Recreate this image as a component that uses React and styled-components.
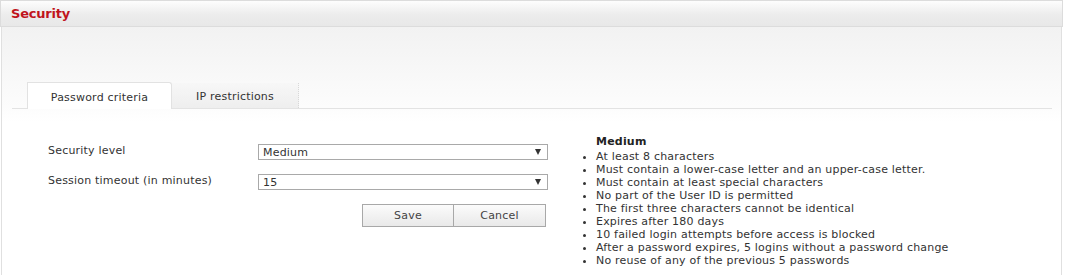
import React, { useState } from 'react';
import styled, { createGlobalStyle } from 'styled-components';

const GlobalStyle = createGlobalStyle`
  html, body {
    margin: 0;
    padding: 0;
    background: #ffffff;
  }
  body {
    font-family: "DejaVu Sans", Verdana, "Liberation Sans", sans-serif;
    font-size: 11px;
    letter-spacing: 0.2px;
    color: #333333;
  }
`;

const Page = styled.div`
  width: 1065px;
`;

const Header = styled.div`
  box-sizing: border-box;
  width: 1063px;
  height: 27px;
  border: 1px solid #dcdcdc;
  background: linear-gradient(#fdfdfd, #ececec 55%, #e8e8e8);
  display: flex;
  align-items: center;
  padding-left: 10px;
`;

const Title = styled.h1`
  margin: 0;
  font-size: 13px;
  font-weight: bold;
  color: #c0141c;
  letter-spacing: -0.2px;
`;

const Panel = styled.div`
  box-sizing: border-box;
  width: 1061px;
  margin-left: 1px;
  min-height: 248px;
  border-left: 1px solid #e0e0e0;
  border-right: 1px solid #e0e0e0;
  background: linear-gradient(#f2f2f2, #fcfcfc 80px, #ffffff 95px);
  padding-top: 55px;
`;

const TabBar = styled.div`
  display: flex;
  align-items: flex-end;
  margin: 0 9px 0 10px;
  padding-left: 15px;
  border-bottom: 1px solid #e3e3e3;
  height: 26px;
`;

const Tab = styled.button`
  box-sizing: border-box;
  width: ${p => p.$w}px;
  height: ${p => (p.$active ? 27 : 25)}px;
  margin-bottom: ${p => (p.$active ? -1 : 0)}px;
  font-family: inherit;
  font-size: 11px;
  letter-spacing: inherit;
  color: #333333;
  cursor: pointer;
  padding: 2px 0 0;
  border: ${p => (p.$active ? '1px solid #e2e2e2' : 'none')};
  border-bottom: none;
  border-right: ${p => (p.$active ? '1px solid #e2e2e2' : '1px dotted #d8d8d8')};
  border-radius: ${p => (p.$active ? '0 3px 0 0' : '0')};
  background: ${p => (p.$active ? '#ffffff' : 'linear-gradient(#f7f7f7, #eeeeee)')};
`;

const Content = styled.div`
  display: flex;
  padding-left: 46px;
`;

const FormCol = styled.div`
  width: 500px;
  padding-top: 35px;
`;

const Row = styled.div`
  display: flex;
  align-items: center;
  height: 16px;
  margin-bottom: 14px;
`;

const Label = styled.label`
  width: 210px;
  color: #333333;
  margin-top: -3px;
`;

const Select = styled.div`
  box-sizing: border-box;
  width: 290px;
  height: 16px;
  border: 1px solid #a9a9a9;
  background: #ffffff;
  display: flex;
  align-items: center;
  justify-content: space-between;
  padding: 0 6px 0 4px;
  color: #333333;
`;

const Arrow = styled.span`
  width: 0;
  height: 0;
  border-left: 3.5px solid transparent;
  border-right: 3.5px solid transparent;
  border-top: 6px solid #333333;
`;

const Buttons = styled.div`
  display: flex;
  justify-content: flex-end;
  padding-right: 2px;
  margin-top: 2px;
`;

const Button = styled.button`
  box-sizing: border-box;
  width: ${p => p.$w}px;
  height: 23px;
  margin-left: -1px;
  font-family: inherit;
  font-size: 11px;
  letter-spacing: inherit;
  color: #444444;
  border: 1px solid #a8a8a8;
  background: linear-gradient(#fbfbfb, #e9e9e9);
  cursor: pointer;
`;

const InfoCol = styled.div`
  margin-left: 48px;
  padding-top: 26px;
  line-height: 13px;
`;

const InfoTitle = styled.div`
  font-weight: bold;
  color: #222222;
  margin-bottom: 2px;
`;

const Rules = styled.ul`
  margin: 0;
  padding: 0;
  list-style: disc outside;
`;

const Rule = styled.li`
  line-height: 13px;
`;

const levels = {
  Medium: [
    'At least 8 characters',
    'Must contain a lower-case letter and an upper-case letter.',
    'Must contain at least special characters',
    'No part of the User ID is permitted',
    'The first three characters cannot be identical',
    'Expires after 180 days',
    '10 failed login attempts before access is blocked',
    'After a password expires, 5 logins without a password change',
    'No reuse of any of the previous 5 passwords',
  ],
};

export default function App() {
  const [tab, setTab] = useState('password');
  const level = 'Medium';

  return (
    <Page>
      <GlobalStyle />
      <Header>
        <Title>Security</Title>
      </Header>
      <Panel>
        <TabBar>
          <Tab $w={145} $active={tab === 'password'} onClick={() => setTab('password')}>
            Password criteria
          </Tab>
          <Tab $w={127} $active={tab === 'ip'} onClick={() => setTab('ip')}>
            IP restrictions
          </Tab>
        </TabBar>
        <Content>
          <FormCol>
            <Row>
              <Label>Security level</Label>
              <Select>
                {level}
                <Arrow />
              </Select>
            </Row>
            <Row>
              <Label>Session timeout (in minutes)</Label>
              <Select>
                15
                <Arrow />
              </Select>
            </Row>
            <Buttons>
              <Button $w={92}>Save</Button>
              <Button $w={93}>Cancel</Button>
            </Buttons>
          </FormCol>
          <InfoCol>
            <InfoTitle>{level}</InfoTitle>
            <Rules>
              {levels[level].map(r => (
                <Rule key={r}>{r}</Rule>
              ))}
            </Rules>
          </InfoCol>
        </Content>
      </Panel>
    </Page>
  );
}
